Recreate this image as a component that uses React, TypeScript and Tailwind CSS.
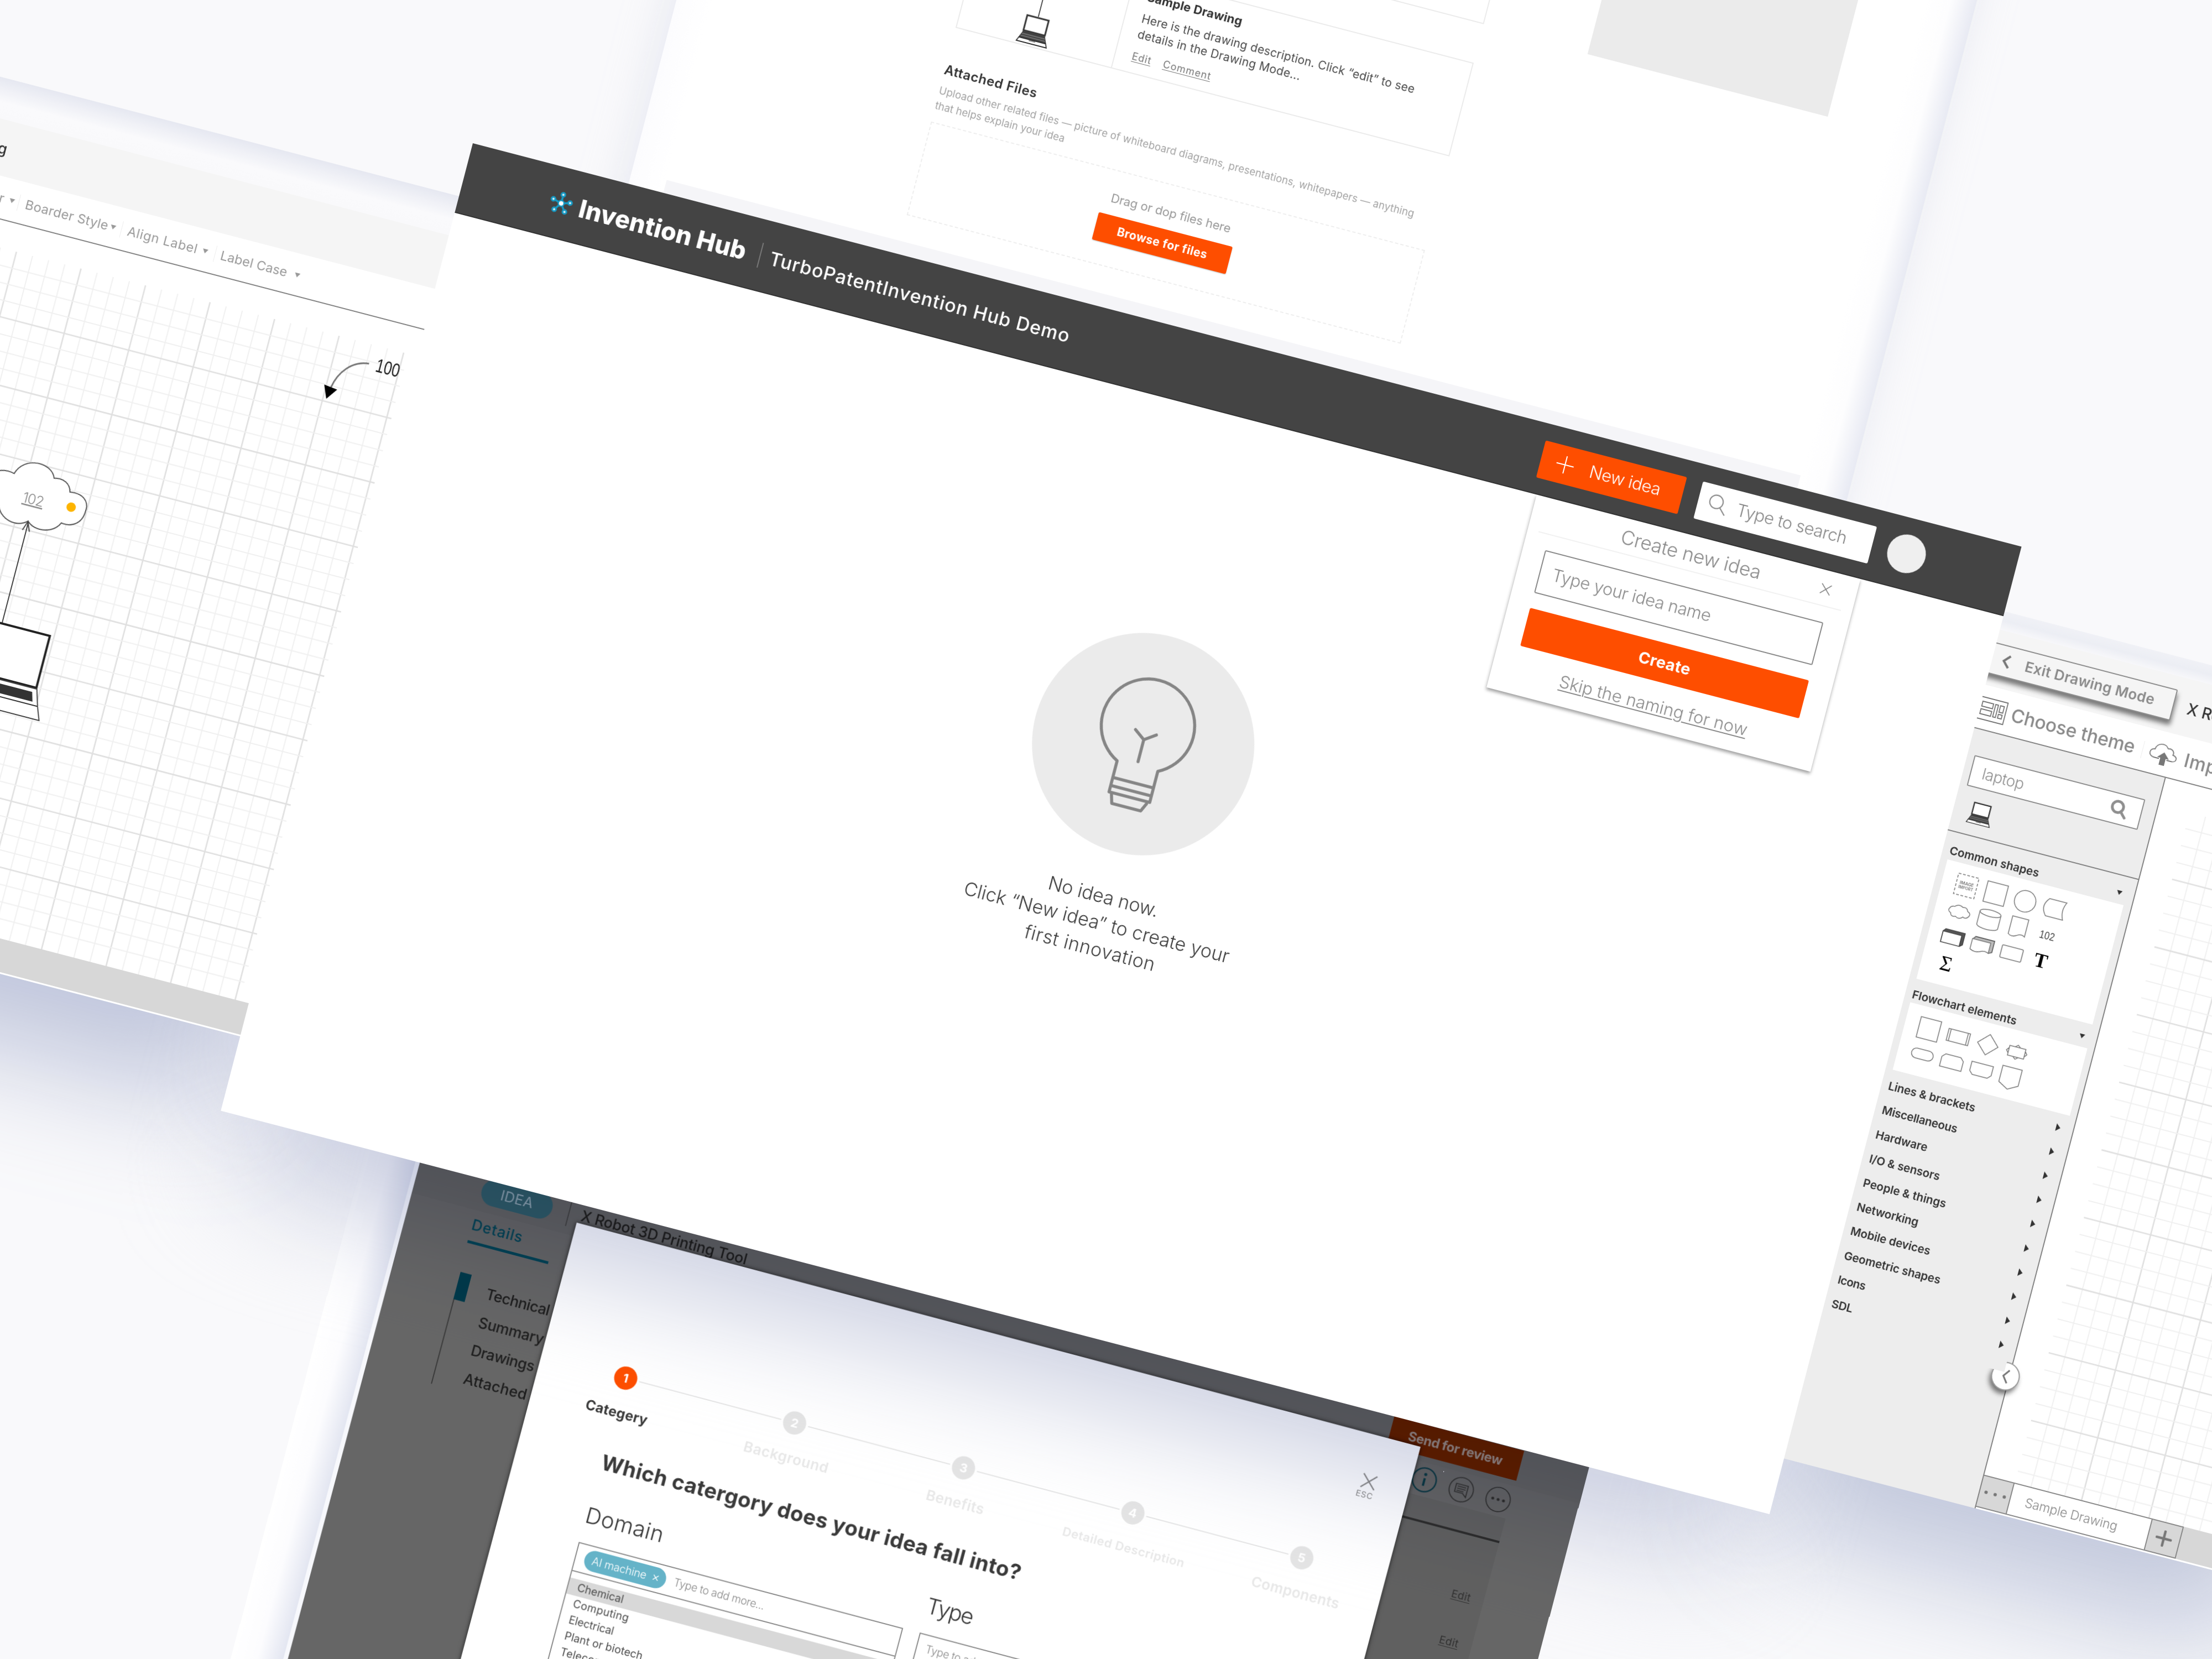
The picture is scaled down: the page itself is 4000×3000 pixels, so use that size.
import React, { useLayoutEffect, useRef, useState } from "react";

/* Single line of text whose tracking is adjusted so that it spans `w` pixels. */
function Label({ text, w, className = "" }: { text: string; w: number; className?: string }) {
  const ref = useRef<HTMLSpanElement>(null);
  const [tracking, setTracking] = useState(0);
  useLayoutEffect(() => {
    if (ref.current) setTracking((w - ref.current.offsetWidth) / text.length);
  }, [text, w]);
  return (
    <span ref={ref} className={"inline-block w-max shrink-0 whitespace-nowrap " + className} style={{ letterSpacing: tracking }}>
      {text}
    </span>
  );
}

function Caret({ className = "" }: { className?: string }) {
  return (
    <svg viewBox="0 0 12 10" className={"h-[10px] w-[12px] shrink-0 " + className}>
      <path d="M1 1h10L6 9z" fill="currentColor" />
    </svg>
  );
}

function Laptop({ className = "" }: { className?: string }) {
  return (
    <svg viewBox="0 0 60 54" className={"shrink-0 " + className} fill="none" stroke="#333">
      <path d="M10 2h40v28H10z" fill="#fff" strokeWidth="3" />
      <path d="M10 32h40l5 12H5z" fill="#444" strokeWidth="1.5" />
      <path d="M8 36h44M7 40h46" stroke="#999" strokeWidth="1" />
      <path d="M5 44h50l3 7H2z" fill="#fff" strokeWidth="1.8" />
      <path d="M24 46h12" strokeWidth="1" />
    </svg>
  );
}

function Magnifier({ className = "", stroke = 2 }: { className?: string; stroke?: number }) {
  return (
    <svg viewBox="0 0 36 36" className={"shrink-0 " + className} fill="none" stroke="currentColor" strokeWidth={stroke} strokeLinecap="round">
      <circle cx="15" cy="14" r="11.5" />
      <path d="M23 22.500L33 33" />
    </svg>
  );
}

function Cross({ className = "", stroke = 2 }: { className?: string; stroke?: number }) {
  return (
    <svg viewBox="0 0 20 20" className={"shrink-0 " + className} stroke="currentColor" strokeWidth={stroke}>
      <path d="M1 1l18 18M19 1L1 19" />
    </svg>
  );
}

/* ---------- idea detail page, upper sheet ---------- */

function IdeaSheet() {
  return (
    <div className="absolute left-[291px] top-[-1100px] flex h-[1160px] w-[2276px] bg-[#f5f5f8] shadow-[-10px_0_70px_rgba(205,210,228,0.4)]">
      <div className="w-[65px] bg-linear-to-r from-[#fcfcfe] to-white" />
      <div className="flex h-[1076px] w-[2119px] bg-white">
        <div className="ml-[436px] flex w-[923px] flex-col justify-end pb-[48px]">
          <div className="h-[431px] border-2 border-[#ebebeb]" />
          <div className="mt-[72px] flex h-[175px] border-2 border-[#ebebeb]">
            <div className="flex w-[290px] flex-col items-center border-r-2 border-[#ebebeb] pr-[12px]">
              <div className="h-[116px] w-[2px] bg-[#555]" />
              <Laptop className="h-[54px] w-[60px]" />
            </div>
            <div className="flex flex-col pl-[30px] pt-[16px] text-[#4a4a4a]">
              <Label text="Sample Drawing" w={177} className="text-[22px] leading-[30px] font-bold text-[#333]" />
              <Label text="Here is the drawing description. Click “edit” to see" w={510} className="mt-[11px] text-[21px] leading-[29px]" />
              <Label text="details in the Drawing Mode..." w={304} className="text-[21px] leading-[29px]" />
              <div className="mt-[15px] flex gap-[22px] text-[18px] leading-[24px] text-[#777] underline underline-offset-3">
                <Label text="Edit" w={36} />
                <Label text="Comment" w={90} />
              </div>
            </div>
          </div>
          <Label text="Attached Files" w={173} className="mt-[63px] text-[24px] leading-[30px] font-semibold text-[#333]" />
          <Label text="Upload other related files — picture of whiteboard diagrams, presentations, whitepapers — anything" w={887} className="mt-[9px] text-[18.500px] leading-[28px] text-[#a3a3a3]" />
          <Label text="that helps explain your idea" w={242} className="text-[18.500px] leading-[28px] text-[#a3a3a3]" />
          <div className="mt-[17px] flex h-[175px] flex-col items-center border-2 border-dashed border-[#eeeeee] pt-[35px]">
            <Label text="Drag or dop files here" w={223} className="text-[22px] leading-[28px] text-[#999]" />
            <div className="mr-[3px] mt-[17px] flex h-[51px] w-[250px] items-center justify-center rounded-[3px] bg-[#fe4e00] shadow-[0_1px_2px_rgba(0,0,0,0.25)]">
              <Label text="Browse for files" w={168} className="text-[21px] font-bold text-white" />
            </div>
          </div>
        </div>
        <div className="ml-[195px] h-[436px] w-[449px] bg-[#ebebeb]" />
      </div>
      <div className="w-[92px] bg-linear-to-r from-white via-[#fdfdfe] to-[#e8eaf3]" />
    </div>
  );
}

/* ---------- idea page with the wizard on top, lower sheet ---------- */

const steps = [
  { n: "1", label: "Categery", w: 115 },
  { n: "2", label: "Background", w: 158 },
  { n: "3", label: "Benefits", w: 108 },
  { n: "4", label: "Detailed Description", w: 228 },
  { n: "5", label: "Components", w: 164 },
];

const domains = [
  { text: "Chemical", w: 86 },
  { text: "Computing", w: 104 },
  { text: "Electrical", w: 84 },
  { text: "Plant or biotech", w: 146 },
  { text: "Telecommunication", w: 186 },
];

function Wizard() {
  return (
    <div className="absolute left-[302px] top-[60px] h-[1100px] w-[1579px] bg-white shadow-[0_0_8px_rgba(0,0,0,0.7)]">
      <div className="flex h-[228px] justify-end pr-[56px] pt-[71px]">
        <div className="flex w-[40px] flex-col items-center text-[#8a8a8a]">
          <Cross className="ml-1 h-[28px] w-[28px]" stroke={1.700} />
          <Label text="ESC" w={32} className="mt-[1px] text-[15px] leading-[20px]" />
        </div>
      </div>
      <div className="flex">
        {steps.map((s, i) => (
          <div key={s.n} className="flex w-[316.2px] shrink-0 flex-col items-center">
            <div className="flex h-[42px] w-full items-center gap-[4px]">
              <div className={i === 0 ? "h-[2px] flex-1" : "h-[2px] flex-1 bg-[#e5e5e5]"} />
              <div className={i === 0
                ? "flex h-[42px] w-[42px] items-center justify-center rounded-full bg-[#fe4e00] text-[22px] font-bold text-white"
                : "flex h-[42px] w-[42px] items-center justify-center rounded-full bg-[#e4e4e4] text-[22px] font-bold text-white"}>{s.n}</div>
              <div className={i === 4 ? "h-[2px] flex-1" : "h-[2px] flex-1 bg-[#e5e5e5]"} />
            </div>
            <Label text={s.label} w={s.w} className={i === 0
              ? "mt-[27px] text-[25px] leading-[32px] font-bold text-[#3a3a3a]"
              : i === 3
                ? "mt-[27px] text-[22px] leading-[32px] font-semibold text-[#e8e8e8]"
                : i === 4
                  ? "ml-[10px] mt-[27px] text-[26px] leading-[32px] font-semibold text-[#e8e8e8]"
                  : "ml-[2px] mt-[27px] text-[26px] leading-[32px] font-semibold text-[#e8e8e8]"} />
          </div>
        ))}
      </div>
      <Label text="Which catergory does your idea fall into?" w={784} className="ml-[155px] mt-[52px] text-[38.500px] leading-[50px] font-bold text-[#3a3a3a]" />
      <div className="ml-[152px] mt-[50px] flex gap-[31px]">
        <div className="w-[607px]">
          <Label text="Domain" w={145} className="text-[40px] leading-[50px] font-light text-[#333]" />
          <div className="mt-[26px] border-2 border-[#8c8c8c]">
            <div className="flex h-[52px] items-center border-b-2 border-[#8c8c8c] pl-[16px]">
              <div className="flex h-[38px] w-[152px] items-center gap-[12px] rounded-full bg-[#65b3c8] pl-[14px] text-white">
                <Label text="AI machine" w={102} className="text-[20px] font-light" />
                <Cross className="h-[10px] w-[10px]" stroke={3} />
              </div>
              <Label text="Type to add more..." w={169} className="ml-[15px] text-[19.500px] font-light text-[#888]" />
            </div>
            <div className="h-[240px] pt-[12px] text-[19.500px] text-[#4a4a4a]">
              {domains.map((d, i) => (
                <div key={d.text} className={i === 0 ? "flex h-[30px] items-center bg-[#d8d8d8] pl-[17px]" : "flex h-[30px] items-center pl-[17px]"}>
                  <Label text={d.text} w={d.w} />
                </div>
              ))}
            </div>
          </div>
        </div>
        <div className="w-[607px]">
          <Label text="Type" w={85} className="text-[40px] leading-[50px] font-light text-[#333]" />
          <div className="mt-[26px] flex h-[54px] items-center border-2 border-[#8c8c8c] pl-[16px]">
            <Label text="Type to add more..." w={169} className="text-[19.500px] font-light text-[#888]" />
          </div>
        </div>
      </div>
    </div>
  );
}

function WizardScreen() {
  return (
    <div className="absolute left-[372px] top-[1780px] h-[1150px] w-[2185px] origin-top-left rotate-[0.28deg]">
      <div className="absolute left-[-100px] top-0 flex h-full w-[101px]">
        <div className="w-[92px] bg-linear-to-r from-white via-[#fcfcfe] to-[#e3e6f1]" />
        <div className="w-[9px] bg-[#f7f8fc]" />
      </div>
      <div className="relative h-full w-full bg-[#666]">
        <div className="flex h-[85px] items-center bg-[#636363] pl-[121px] pr-[121px] pt-[8px]">
          <div className="flex h-[48px] w-[132px] items-center justify-center rounded-full bg-[#2f5d69]">
            <Label text="IDEA" w={60} className="text-[26px] text-[#8fa5ad]" />
          </div>
          <div className="ml-[30px] h-[48px] w-[2px] bg-[#444]" />
          <Label text="X Robot 3D Printing Tool" w={310} className="ml-[22px] text-[27px] font-medium text-[#1d1d1d]" />
          <div className="ml-auto flex h-[56px] w-[243px] items-center justify-center bg-[#661f00]">
            <Label text="Send for review" w={175} className="text-[24px] font-bold text-[#9a8a82]" />
          </div>
        </div>
        <div className="flex h-[61px] pl-[120px] pr-[121px]">
          <div className="h-[61px] w-[151px] border-b-5 border-[#004355]">
            <Label text="Details" w={95} className="text-[27px] leading-[54px] font-medium text-[#004355]" />
          </div>
          <div className="ml-auto flex items-center gap-[23px]">
            <svg viewBox="0 0 46 46" className="h-[46px] w-[46px]" fill="none" stroke="#093844" strokeWidth="2.500">
              <circle cx="23" cy="23" r="21.500" />
              <path d="M23 20v14" strokeWidth="4" />
              <circle cx="23" cy="13" r="1.500" />
            </svg>
            <svg viewBox="0 0 46 46" className="h-[46px] w-[46px]" fill="none" stroke="#2c2c2c" strokeWidth="1.700">
              <circle cx="23" cy="23" r="22" />
              <path d="M12 14h22v21l-7-6H12zM15 18h16M15 22h16M15 26h13" />
            </svg>
            <svg viewBox="0 0 46 46" className="h-[46px] w-[46px]" fill="none" stroke="#2c2c2c" strokeWidth="1.700">
              <circle cx="23" cy="23" r="22" />
              <g fill="#2c2c2c" stroke="none"><circle cx="13" cy="23" r="2.600" /><circle cx="23" cy="23" r="2.600" /><circle cx="33" cy="23" r="2.600" /></g>
            </svg>
          </div>
        </div>
        <div className="flex">
          <div className="ml-[122px] mt-[54px] flex w-[180px] shrink-0">
            <div className="w-[21px] shrink-0">
              <div className="h-[51px] bg-[#00394a]" />
              <div className="h-[158px] w-[2px] bg-[#3a3a3a]" />
            </div>
            <div className="ml-[34px] mt-[1px] flex flex-col items-start text-[27px] leading-[52.7px] font-medium text-[#1d1d1d]">
              <Label text="Technical" w={118} />
              <Label text="Summary" w={121} />
              <Label text="Drawings" w={118} />
              <Label text="Attached files" w={182} />
            </div>
          </div>
          <div className="relative flex h-[1004px] w-[1761px] flex-col items-end bg-[#606060]">
            <div className="mt-[42px] h-[4px] w-full bg-[#2c2c2c]" />
            <div className="flex flex-col pr-[24px] pt-[67px] text-[19px] leading-[86px] text-[#303030] underline underline-offset-3">
              <Label text="Edit" w={36} />
              <Label text="Edit" w={36} />
            </div>
          </div>
        </div>
        <Wizard />
      </div>
    </div>
  );
}

/* ---------- drawing mode, left part ---------- */

const range = (n: number) => Array.from({ length: n }, (_, i) => i);

function LeftCanvas() {
  return (
    <svg viewBox="-1000 349 1005 1258" className="h-[1258px] w-[1005px]" fill="none">
      {range(31).map((i) => (
        <path key={"v" + i} d={`M${-25.5 - i * 30.15} 398V1607`} stroke={i % 4 === 0 ? "#e0e0e0" : "#f0f0f0"} strokeWidth={i % 4 === 0 ? 2.6 : 2} />
      ))}
      {range(39).map((i) => (
        <path key={"h" + i} d={`M-1000 ${428.7 + i * 30.1}H-17`} stroke={i % 4 === 3 ? "#e0e0e0" : "#f0f0f0"} strokeWidth={i % 4 === 3 ? 2.6 : 2} />
      ))}
      <path d="M-81 433C-112 436 -132 462 -137 492" stroke="#777" strokeWidth="3" />
      <path d="M-150 490L-125 493L-140 514z" fill="#000" />
      <text x="-68" y="444" textLength="44" lengthAdjust="spacingAndGlyphs" className="font-['Liberation_Sans'] text-[35px]" fill="#222">100</text>
      <path d="M-652 787C-642 751 -590 750 -580 777C-563 772 -549 780 -546 794C-520 790 -508 804 -510 820C-510 846 -530 855 -547 852C-556 874 -590 880 -606 864C-625 882 -657 872 -664 850C-690 856 -704 840 -702 822C-702 800 -680 780 -652 787z" fill="#fff" stroke="#555" strokeWidth="2" />
      <text x="-626" y="833" textLength="39" className="text-[25px] font-light underline" fill="#888">102</text>
      <circle cx="-537" cy="820" r="8.500" fill="#fdb400" />
      <path d="M-605 1054V866M-612 882L-606 865L-599 882" stroke="#444" strokeWidth="2" />
      <path d="M-695 1055H-515.500V1152H-695z" fill="#fff" stroke="#222" strokeWidth="4" />
      <path d="M-710 1154H-514L-505 1184L-496 1208H-710" fill="#fff" stroke="#444" strokeWidth="2" />
      <path d="M-710 1161H-521L-516 1178H-710z" fill="#333" />
      <path d="M-710 1184H-505" stroke="#333" strokeWidth="2" />
    </svg>
  );
}

function LeftScreen() {
  return (
    <div className="absolute left-[-1000px] top-[99px] w-[1005px]">
      <div className="absolute inset-x-0 bottom-[20px] top-[900px] shadow-[0_150px_200px_rgba(128,141,184,0.47)]" />
      <div className="relative">
        <div className="h-[73px] bg-linear-to-b from-[#e6e8f1] via-[#fafafc] via-60% to-[#f9f9fb]" />
        <div className="flex h-[100px] items-center justify-end bg-[#f5f5f5] pr-[817px] pt-[4px]">
          <span className="text-[27px] font-medium text-[#333]">Drawing</span>
        </div>
        <div className="flex h-[75px] items-center justify-end bg-white pr-[246px] pt-[2px] text-[23.500px] text-[#999]">
          <span>Border Color</span>
          <Caret className="ml-[9px]" />
          <div className="ml-[6px] h-[30px] w-px bg-[#eee]" />
          <Label text="Boarder Style" w={155} className="ml-[12px]" />
          <Caret className="ml-[3px]" />
          <div className="ml-[9px] h-[30px] w-px bg-[#eee]" />
          <Label text="Align Label" w={131} className="ml-[11px]" />
          <Caret className="ml-[8px]" />
          <div className="ml-[12px] h-[30px] w-px bg-[#eee]" />
          <Label text="Label Case" w={124} className="ml-[10px]" />
          <Caret className="ml-[13px]" />
        </div>
        <div className="h-[2px] bg-[#858585]" />
        <div className="h-[1258px] bg-white"><LeftCanvas /></div>
        <div className="h-[59px] bg-[#d7d7d7]" />
        <div className="h-[3px] bg-white" />
      </div>
    </div>
  );
}

/* ---------- drawing mode, right part ---------- */

const cell = "h-[42px] w-[42px]";

const commonShapes: React.ReactNode[] = [
  <svg key="a" viewBox="-21 -21 42 42" className={cell} fill="none" stroke="#777" strokeWidth="1.500">
    <path d="M-19 -19H19V19H-19z" strokeDasharray="5 3" />
    <text x="0" y="-1" textAnchor="middle" className="text-[8px]" fill="#777" stroke="none">IMAGE</text>
    <text x="0" y="7" textAnchor="middle" className="text-[7px]" fill="#777" stroke="none">IMPORT</text>
  </svg>,
  <svg key="b" viewBox="-21 -21 42 42" className={cell} fill="none" stroke="#777" strokeWidth="1.500"><path d="M-19 -19H19V19H-19z" /></svg>,
  <svg key="c" viewBox="-21 -21 42 42" className={cell} fill="none" stroke="#777" strokeWidth="1.500"><circle r="19.500" /></svg>,
  <svg key="d" viewBox="-21 -21 42 42" className={cell} fill="none" stroke="#777" strokeWidth="1.500"><path d="M-12 -16H20Q12 0 20 16H-12Q-26 0 -12 -16z" /></svg>,
  <svg key="e" viewBox="-21 -21 42 42" className={cell} fill="none" stroke="#777" strokeWidth="1.500"><path d="M-11 -8Q-4 -15 4 -10Q12 -12 14 -5Q22 -2 18 4Q14 10 8 7Q2 14 -5 9Q-14 12 -15 5Q-22 2 -19 -3Q-17 -8 -11 -8z" /></svg>,
  <svg key="f" viewBox="-21 -21 42 42" className={cell} fill="none" stroke="#777" strokeWidth="1.500"><ellipse cy="-12" rx="19.500" ry="6" /><path d="M-19.500 -12V12A19.500 6 0 0 0 19.500 12V-12" /></svg>,
  <svg key="g" viewBox="-21 -21 42 42" className={cell} fill="none" stroke="#777" strokeWidth="1.500"><path d="M-15 -18H15V14Q8 9 0 15Q-8 20 -15 15z" /></svg>,
  <svg key="h" viewBox="-21 -21 42 42" className={cell}><text x="-14" y="8" textLength="28" lengthAdjust="spacingAndGlyphs" className="font-['Liberation_Sans'] text-[21px] font-normal" fill="#444">102</text></svg>,
  <svg key="i" viewBox="-21 -21 42 42" className={cell} fill="none" stroke="#444" strokeWidth="1.700"><path d="M-20 -8L-16 -13H20V8L15 12" fill="#555" /><path d="M-20 -8H15V12H-20z" fill="#fff" /></svg>,
  <svg key="j" viewBox="-21 -21 42 42" className={cell} fill="none" stroke="#777" strokeWidth="1.500"><path d="M-19 -8L-15 -13H20V8L14 11" fill="#bbb" stroke="#666" strokeWidth="1.800" /><path d="M-20 -8H14V11Q6 7 -2 12Q-12 16 -20 11z" fill="#fff" /></svg>,
  <svg key="k" viewBox="-21 -21 42 42" className={cell} fill="none" stroke="#777" strokeWidth="1.600"><rect x="-19.500" y="-11" width="39" height="23" rx="2" /></svg>,
  <span key="l" className="font-['Liberation_Serif'] text-[36px] leading-none font-bold text-black">T</span>,
  <span key="m" className="font-['Liberation_Serif'] text-[38px] leading-none font-normal text-black">Σ</span>,
];

const flowShapes = [
  "M-19 -19H19V19H-19z",
  "M-20 -11H20V11H-20zM-16 -11V11M16 -11V11",
  "M0 -19L19 0L0 19L-19 0z",
  "M-15 -9H15V9H-15zM-5 -9L0 -13L5 -9M-5 9L0 13L5 9M-15 -5L-19 0L-15 5M15 -5L19 0L15 5",
  "M-11 -9H11A9 9 0 0 1 11 9H-11A9 9 0 0 1 -11 -9z",
  "M-14 -12H14L20 -6V12H-20V-6z",
  "M-20 -11H20V6L14 12H-14L-20 6z",
  "M-18 -18H18V12L0 22L-18 12z",
];

const categories = [
  { text: "Lines & brackets", w: 162 },
  { text: "Miscellaneous", w: 140 },
  { text: "Hardware", w: 96 },
  { text: "I/O & sensors", w: 131 },
  { text: "People & things", w: 155 },
  { text: "Networking", w: 115 },
  { text: "Mobile devices", w: 148 },
  { text: "Geometric shapes", w: 179 },
  { text: "Icons", w: 51 },
  { text: "SDL", w: 39 },
];

function RightCanvas() {
  return (
    <svg viewBox="3252 339 530 1302" className="h-[1302px] w-[530px]" fill="none">
      {range(15).map((i) => (
        <path key={"v" + i} d={`M${3339.2 + i * 31.5} 389V1641`} stroke={i % 4 === 3 ? "#e0e0e0" : "#f0f0f0"} strokeWidth={i % 4 === 3 ? 2.6 : 2} />
      ))}
      {range(39).map((i) => (
        <path key={"h" + i} d={`M3309 ${418.7 + i * 31.6}H3800`} stroke={i % 4 === 3 ? "#e0e0e0" : "#f0f0f0"} strokeWidth={i % 4 === 3 ? 2.6 : 2} />
      ))}
    </svg>
  );
}

function RightScreen() {
  return (
    <div className="absolute left-[2880px] top-[121px] w-[902px]">
      <div className="absolute inset-x-0 bottom-[20px] top-[900px] shadow-[0_150px_200px_rgba(128,141,184,0.45)]" />
      <div className="relative">
        <div className="h-[34px] bg-linear-to-b from-[#f0f1f6] via-[#eceef4] to-[#f7f7fa]" />
        <div className="flex h-[103px] items-center bg-[#f5f5f5] pt-[2px]">
          <div className="flex h-[58px] w-[353px] items-center rounded-r-[3px] border-2 border-[#8f8f8f] bg-[#f5f5f5] pl-[30px] text-[#8a8a8a] shadow-[2px_8px_8px_rgba(0,0,0,0.5)]">
            <svg viewBox="0 0 16 26" className="h-[26px] w-[16px]" fill="none" stroke="#777" strokeWidth="4"><path d="M13.500 2L3 13l10.500 11" /></svg>
            <Label text="Exit Drawing Mode" w={242} className="ml-[27px] text-[26px] font-semibold" />
          </div>
          <Label text="X Robot 3D Printing Tool" w={330} className="ml-[25px] text-[28px] font-medium text-[#333]" />
        </div>
        <div className="flex h-[79px] items-center bg-white pt-[4px] text-[33.500px] font-medium text-[#8a8a8a]">
          <svg viewBox="0 0 52 42" className="ml-[11px] h-[42px] w-[52px]" fill="none" stroke="#777" strokeWidth="1.800">
            <path d="M1 1h50v40H1zM6 9h20v9H6zM6 23h20v9H6zM30 9h5v23h-5zM39 9h7v12h-7zM39 25h7v7h-7z" />
          </svg>
          <Label text="Choose theme" w={231} className="ml-[10px]" />
          <div className="ml-[14px] h-[32px] w-px bg-[#eee]" />
          <svg viewBox="0 0 52 42" className="ml-[12px] h-[42px] w-[52px]" fill="none" stroke="#777" strokeWidth="1.800">
            <path d="M20 29H11C-2 29 -1 14 9 14C10 2 26 -2 32 8C40 5 45 12 43 17C54 19 52 29 43 29H34" />
            <path d="M27 16L38 27H32V40H22V27H16z" fill="#777" stroke="none" />
          </svg>
          <Label text="Import" w={110} className="ml-[14px]" />
        </div>
        <div className="h-[2px] bg-[#858585]" />
        <div className="flex h-[1365px] bg-white">
          <div className="relative w-[372px] border-r-2 border-[#858585] bg-[#ededed]">
            <div className="h-[191px] border-b-2 border-[#858585] pl-[27px] pt-[47px]">
              <div className="flex h-[57px] w-[319px] items-center justify-between rounded-[2px] border-2 border-[#8f8f8f] bg-white pl-[20px] pr-[24px] text-[#8f8f8f]">
                <Label text="laptop" w={77} className="text-[28px] font-light" />
                <Magnifier className="h-[32px] w-[32px]" stroke={5.500} />
              </div>
              <Laptop className="ml-[14px] mt-[23px] h-[44px] w-[46px]" />
            </div>
            <div className="absolute left-[338px] top-[1094px] flex h-[52px] w-[52px] items-center justify-center rounded-full border-2 border-[#9a9a9a] bg-white shadow-[-2px_7px_9px_rgba(0,0,0,0.5)]">
              <svg viewBox="0 0 16 28" className="h-[28px] w-[16px]" fill="none" stroke="#777" strokeWidth="3"><path d="M13 2L4 14l9 12" /></svg>
            </div>
            <div className="relative h-[922px] w-[360px] bg-[#ededed] pl-[27px] text-[20.500px] font-semibold text-[#333]">
              <div className="flex h-[51px] items-center justify-between pr-[11px] pt-[18px]">
                <Label text="Common shapes" w={166} />
                <Caret className="mb-[8px]" />
              </div>
              <div className="grid h-[223px] w-[329px] auto-rows-[48.400px] grid-cols-[repeat(4,54.700px)] items-center justify-items-center bg-white pl-[18px] pt-[14px]">
                {commonShapes}
              </div>
              <div className="flex h-[44px] items-center justify-between pr-[11px] pt-[14px]">
                <Label text="Flowchart elements" w={195} />
                <Caret className="mb-[8px]" />
              </div>
              <div className="grid h-[126px] w-[331px] auto-rows-[47.500px] grid-cols-[repeat(4,54.700px)] items-center justify-items-center bg-white pl-[18px] pt-[16px]">
                {flowShapes.map((d) => (
                  <svg key={d} viewBox="-22 -22 44 46" className="h-[46px] w-[44px]" fill="none" stroke="#777" strokeWidth="1.500"><path d={d} /></svg>
                ))}
              </div>
              <div className="pt-[8px]">
                {categories.map((c) => (
                  <div key={c.text} className="flex h-[45.200px] items-center justify-between pr-[12px]">
                    <Label text={c.text} w={c.w} />
                    <svg viewBox="0 0 10 14" className="mb-[10px] h-[14px] w-[10px]"><path d="M1 0L9 7L1 14z" fill="#333" /></svg>
                  </div>
                ))}
              </div>
            </div>
          </div>
          <div className="h-[1302px] w-[530px]">
            <RightCanvas />
            <div className="flex h-[60px] w-[530px] border-y-2 border-[#8a8a8a] bg-[#d7d7d7]">
              <div className="flex w-[57px] items-center justify-center gap-[11px] border-r-2 border-[#8a8a8a]">
                <i className="h-[6px] w-[6px] rounded-full bg-[#777]" />
                <i className="h-[6px] w-[6px] rounded-full bg-[#777]" />
                <i className="h-[6px] w-[6px] rounded-full bg-[#777]" />
              </div>
              <div className="flex w-[258px] items-center border-r-2 border-[#8a8a8a] bg-white pl-[27px]">
                <Label text="Sample Drawing" w={172} className="text-[23px] font-light text-[#888]" />
              </div>
              <div className="flex w-[58px] items-center justify-center border-r-2 border-[#8a8a8a]">
                <svg viewBox="0 0 30 30" className="h-[30px] w-[30px]" stroke="#777" strokeWidth="4.500" strokeLinecap="round"><path d="M15 2v26M2 15h26" /></svg>
              </div>
              <div className="-my-[2px] flex-1 bg-[#d7d7d7]" />
            </div>
          </div>
        </div>
      </div>
    </div>
  );
}

/* ---------- dashboard in front ---------- */

const hubNodes = [[0, -16], [15.5, -4.5], [9.6, 13.5], [-9.6, 13.5], [-15.5, -4.5]];

function Dashboard() {
  return (
    <div className="absolute left-0 top-0 h-[1808px] w-[2894px] bg-white">
      <div className="flex h-[130px] items-center border-b-2 border-[#333] bg-[#444] pl-[160px] pt-[2px]">
        <svg viewBox="-22 -22 44 44" className="h-[44px] w-[44px]">
          {hubNodes.map(([x, y]) => (
            <g key={x + "," + y}>
              <path d={`M0 0L${x} ${y}`} stroke="#1599c4" strokeWidth="3.500" />
              <circle cx={x} cy={y} r="5" fill="#1599c4" />
              <circle cx={x} cy={y} r="2" fill="#d6f0f8" />
            </g>
          ))}
          <circle r="6.500" fill="#1599c4" />
          <circle r="4" fill="#fff" />
        </svg>
        <Label text="Invention Hub" w={311} className="ml-[12px] text-[45px] font-extrabold text-white" />
        <div className="ml-[26px] h-[46px] w-[2px] bg-[#777]" />
        <Label text="TurboPatentInvention Hub Demo" w={560} className="ml-[17px] text-[34px] font-medium text-white" />
        <div className="ml-auto flex items-center pr-[163px]">
          <div className="flex h-[69px] w-[264px] items-center rounded-[3px] bg-[#fe4e00] pl-[28px] text-white">
            <svg viewBox="0 0 34 34" className="h-[34px] w-[34px]" stroke="currentColor" strokeWidth="2"><path d="M17 1v32M1 17h32" /></svg>
            <Label text="New idea" w={132} className="ml-[29px] text-[31px] font-light" />
          </div>
          <div className="ml-[30px] flex h-[69px] w-[325px] items-center rounded-[3px] bg-white pl-[17px] text-[#888]">
            <Magnifier className="h-[38px] w-[38px]" />
            <Label text="Type to search" w={205} className="ml-[17px] text-[31px] font-light" />
          </div>
          <div className="ml-[29px] h-[70px] w-[70px] rounded-full bg-[#efefef]" />
        </div>
      </div>

      <div className="flex flex-col items-center text-[34px] leading-[48px] font-light text-[#3d3d3d]">
        <div className="mb-[60px] mt-[415px] flex h-[402px] w-[402px] items-center justify-center rounded-full bg-[#ebebeb]">
          <svg viewBox="-100 -130 200 260" className="h-[260px] w-[200px]" fill="none" stroke="#858585" strokeWidth="5.500" strokeLinecap="round" strokeLinejoin="round">
            <path d="M-38 99V41A84.500 84.500 0 1 1 38 41V99z" />
            <path d="M-37 72H37M-37 87H37" />
            <path d="M-33 101L-28 118H26L33 103" />
            <path d="M-20 -22L-1 -8L19 -22M-1 -8V33" />
          </svg>
        </div>
        <Label text="No idea now." w={205} />
        <Label text="Click “New idea” to create your" w={495} />
        <Label text="first innovation" w={243} />
      </div>

      <div className="absolute left-[2022px] top-[130px] h-[360px] w-[605px] bg-white text-[#8a8a8a] shadow-[0_4px_6px_rgba(0,0,0,0.38)]">
        <div className="mx-[20px] flex h-[65px] items-center border-b-2 border-[#f1f1f1] pl-[147px] pr-[26px] pt-[5px]">
          <Label text="Create new idea" w={260} className="text-[35px] font-light" />
          <Cross className="ml-auto h-[20px] w-[20px] text-[#777]" stroke={1.600} />
        </div>
        <div className="ml-[40px] mt-[28px] flex h-[80px] w-[520px] items-center rounded-[3px] border-2 border-[#8a8a8a] pl-[22px]">
          <Label text="Type your idea name" w={296} className="text-[31px] font-light" />
        </div>
        <div className="ml-[40px] mt-[28px] flex h-[71px] w-[521px] items-center justify-center rounded-[3px] bg-[#fe4e00]">
          <Label text="Create" w={97} className="text-[29px] font-bold text-white" />
        </div>
        <Label text="Skip the naming for now" w={350} className="ml-[125px] mt-[24px] text-[31px] leading-[40px] font-light underline decoration-2 underline-offset-4" />
      </div>
    </div>
  );
}

export default function App() {
  return (
    <div className="relative h-[3000px] w-[4000px] overflow-hidden bg-[#f9f9fb] font-['Inter',sans-serif]">
      <div className="absolute left-[855px] top-[259px] origin-top-left rotate-[14.6deg]">
        <IdeaSheet />
        <WizardScreen />
        <div className="absolute left-[60px] top-[1000px] h-[920px] w-[2780px] bg-[#ccd0e1] mix-blend-multiply blur-[100px]" />
        <LeftScreen />
        <RightScreen />
        <Dashboard />
      </div>
    </div>
  );
}
